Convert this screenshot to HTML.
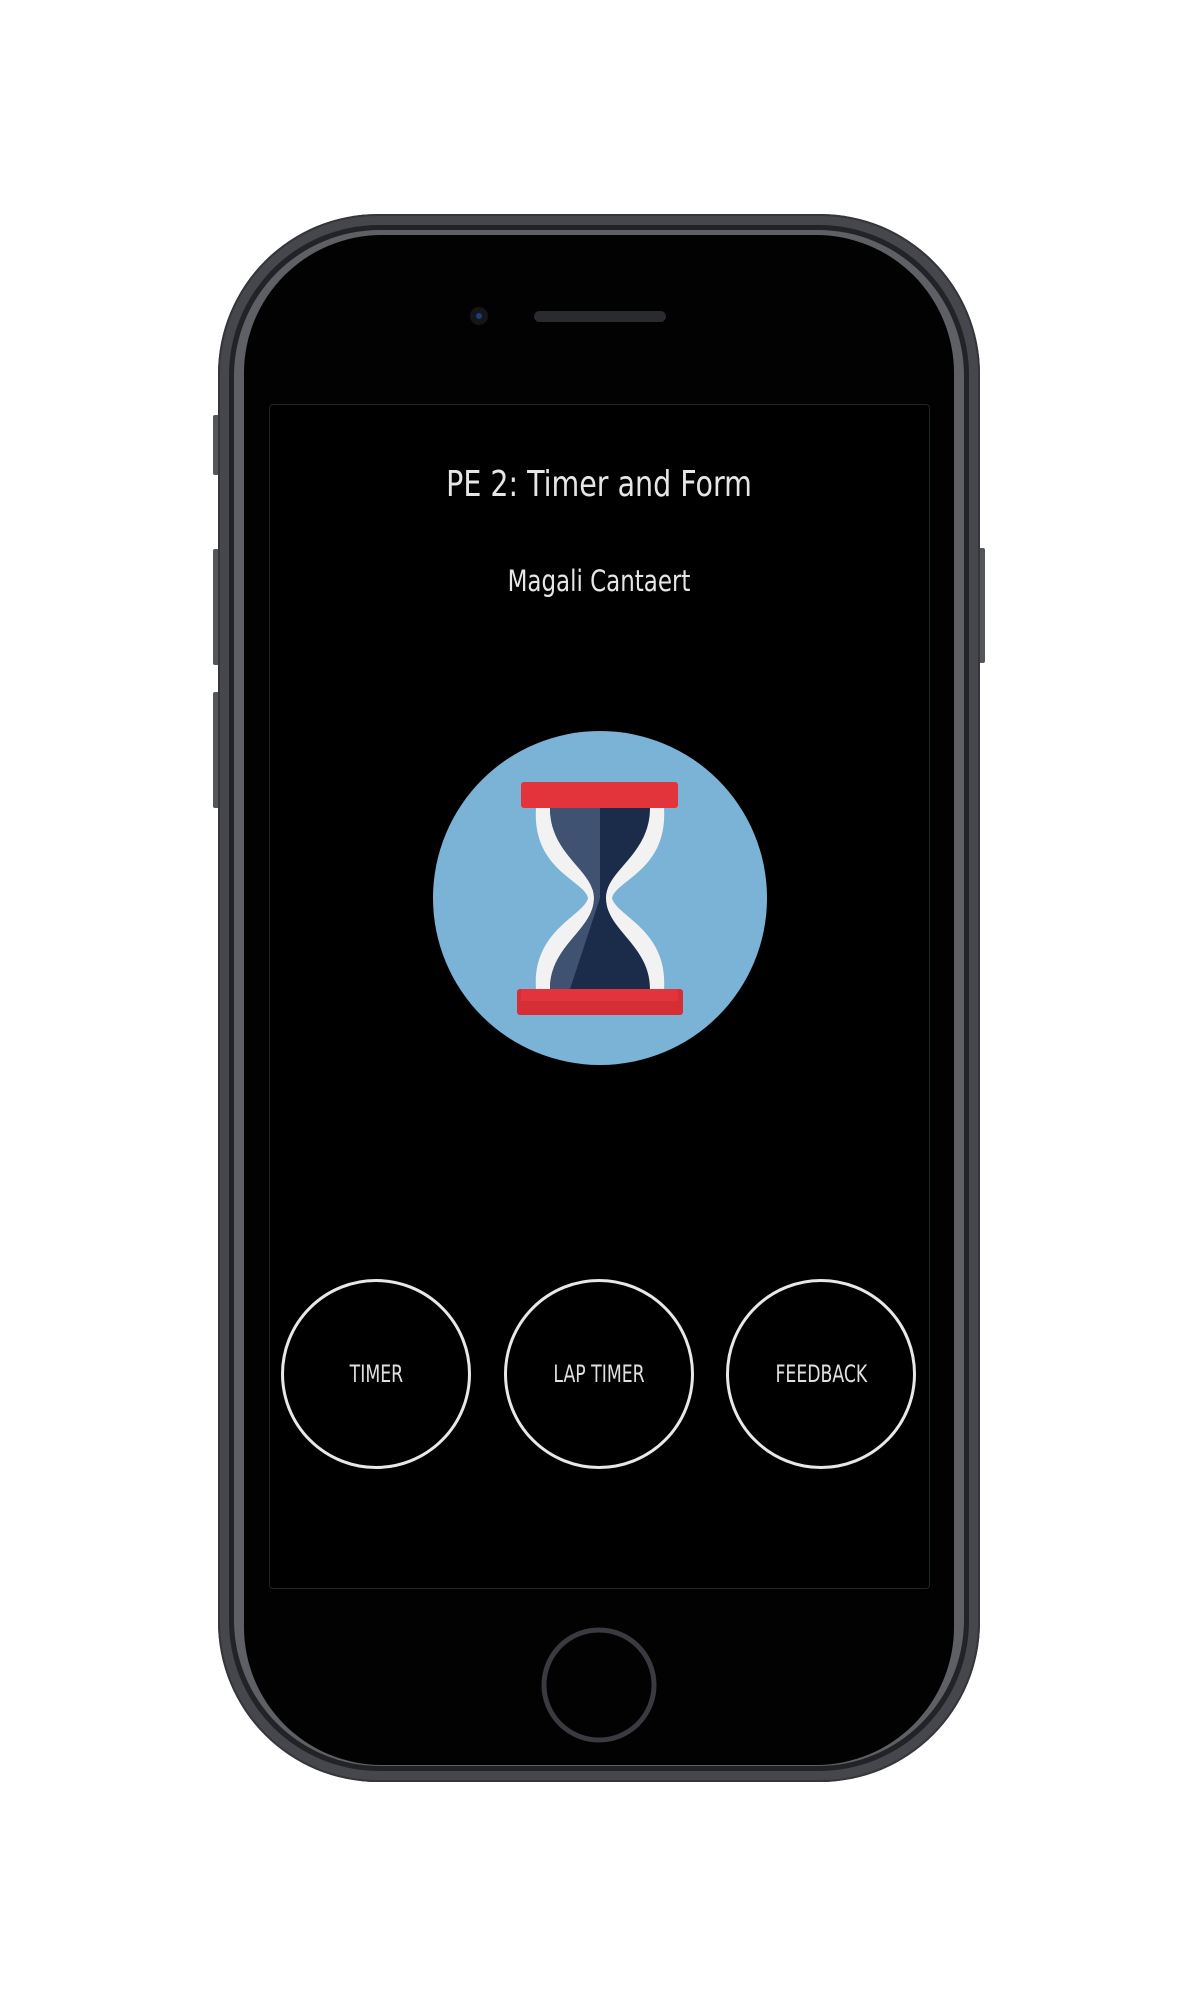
<!DOCTYPE html>
<html><head><meta charset="utf-8"><style>
html,body{margin:0;padding:0;background:#fff;width:1198px;height:2000px;overflow:hidden;position:relative;font-family:"Liberation Sans",sans-serif}
.abs{position:absolute}
.phone{left:218px;top:214px;width:762px;height:1568px;border-radius:160px;background:#46474c;box-shadow:inset 0 0 0 2px #35363a}
.band{left:229px;top:225px;width:740px;height:1546px;border-radius:150px;background:#222326}
.band2{left:234px;top:230px;width:730px;height:1536px;border-radius:146px;background:#5f6065}
.screen{left:244px;top:235px;width:710px;height:1530px;border-radius:138px;background:#020202}
.box{left:269px;top:404px;width:659px;height:1183px;border:1.5px solid #1b2628;border-radius:4px;background:#000}
.t{color:#e6e6e6;width:1198px;left:0;text-align:center;font-family:"DejaVu Sans Condensed","Liberation Sans Narrow","Liberation Sans",sans-serif;transform:scaleX(.88)}
.btn{width:190px;height:190px;border:3px solid #e8e8e8;border-radius:50%;box-sizing:border-box;color:#e0e0e0;display:flex;align-items:center;justify-content:center;font-family:"DejaVu Sans Condensed","Liberation Sans Narrow",sans-serif;font-size:24px}
.btn span{display:inline-block;transform:scaleX(.8)}
.sb{background:#55565b;border-radius:2px;width:6px}
</style></head><body>
<div class="abs sb" style="left:213px;top:415px;height:60px"></div>
<div class="abs sb" style="left:213px;top:549px;height:116px"></div>
<div class="abs sb" style="left:213px;top:692px;height:116px"></div>
<div class="abs sb" style="left:979px;top:548px;height:115px"></div>
<div class="abs phone"></div>
<div class="abs band"></div>
<div class="abs band2"></div>
<div class="abs screen"></div>
<div class="abs" style="left:470px;top:307px;width:18px;height:18px;border-radius:50%;background:#15161a"></div>
<div class="abs" style="left:476px;top:313px;width:6px;height:6px;border-radius:50%;background:#1f3b7a"></div>
<div class="abs" style="left:534px;top:311px;width:132px;height:11px;border-radius:6px;background:#2a2b2e"></div>
<div class="abs box"></div>
<div class="abs t" style="top:464px;font-size:36px">PE 2: Timer and Form</div>
<div class="abs t" style="top:564px;font-size:29px">Magali Cantaert</div>
<svg class="abs" style="left:0;top:0" width="1198" height="2000">
<circle cx="600" cy="898" r="167" fill="#7bb3d6"/>
<path d="M536 808 L664 808 C668 870 616 880 612 898 C616 916 668 930 664 989 L536 989 C532 930 584 916 588 898 C584 880 532 870 536 808Z" fill="#f2f2f2"/>
<path d="M550 808 L650 808 C650 855 606 870 606 898 L594 898 C594 870 550 855 550 808Z" fill="#1b2c4a"/>
<path d="M550 808 L600 808 L600 898 L594 898 C594 870 550 855 550 808Z" fill="#3f5272"/>
<path d="M594 898 L606 898 C606 930 650 945 650 989 L550 989 C550 945 594 930 594 898Z" fill="#1b2c4a"/>
<path d="M594 898 L600 898 L570 989 L550 989 C550 945 594 930 594 898Z" fill="#3f5272"/>
<rect x="521" y="782" width="157" height="26" rx="3" fill="#e2343a"/>
<rect x="517" y="989" width="166" height="26" rx="3" fill="#d52e34"/>
<rect x="521" y="989" width="157" height="12" fill="#e2343a"/>
<circle cx="599" cy="1685" r="55" fill="none" stroke="#3a3b40" stroke-width="5"/>
</svg>
<div class="abs btn" style="left:281px;top:1279px"><span>TIMER</span></div>
<div class="abs btn" style="left:504px;top:1279px"><span>LAP TIMER</span></div>
<div class="abs btn" style="left:726px;top:1279px"><span>FEEDBACK</span></div>
</body></html>
